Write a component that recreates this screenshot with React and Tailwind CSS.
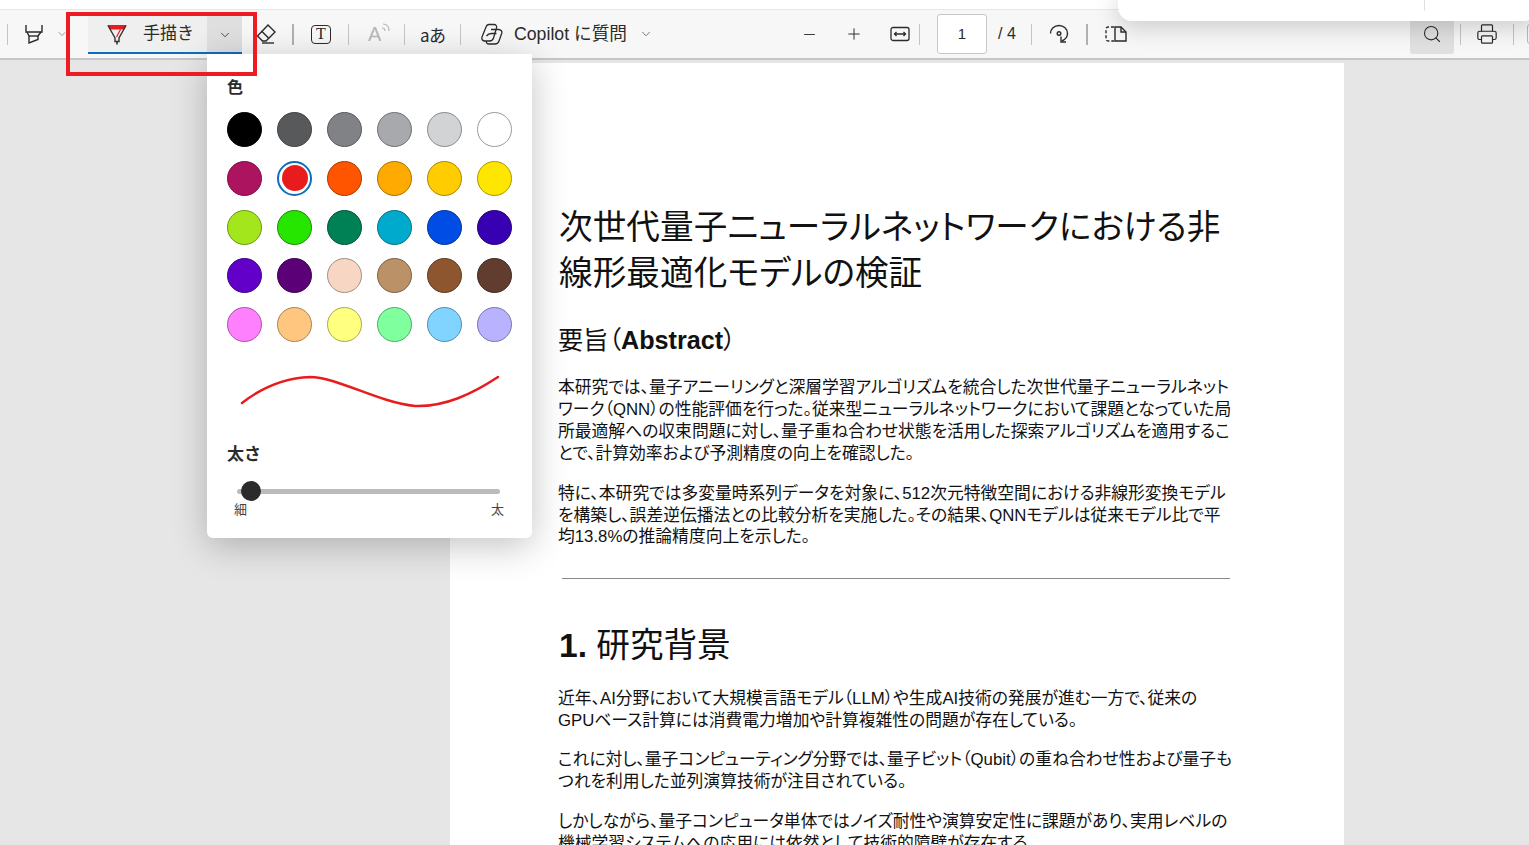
import React from "react";
import { Minus, Plus, ChevronDown, Search, Printer } from "lucide-react";

const jp = "font-['Liberation_Sans','Noto_Sans_CJK_JP',sans-serif]";

const colors = [
  ["#000000", "#000000"], ["#58595b", "#3f4042"], ["#808285", "#58595b"], ["#a7a9ac", "#6f7072"], ["#d1d3d4", "#8a8b8c"], ["#ffffff", "#9a9a9a"],
  ["#ad1460", "#7c0e45"], ["#e81c1c", "#e81c1c"], ["#ff5500", "#a83800"], ["#ffaa00", "#a87000"], ["#ffcc00", "#a88700"], ["#ffe600", "#a89800"],
  ["#a3e61c", "#6b9712"], ["#26e600", "#198a00"], ["#008055", "#00553a"], ["#00aacc", "#007087"], ["#004de6", "#003398"], ["#3700b3", "#250077"],
  ["#6200c9", "#410085"], ["#5c0077", "#3d004f"], ["#f7d7c4", "#a38e81"], ["#bb9167", "#7b6044"], ["#8e562e", "#5e391e"], ["#613d30", "#402820"],
  ["#ff80ff", "#a855a8"], ["#ffc680", "#a88355"], ["#ffff80", "#a8a855"], ["#80ff9f", "#55a869"], ["#80d4ff", "#558ca8"], ["#b9b3ff", "#7a76a8"],
];

function Sep({ left, right, dark }) {
  return <div className={`h-[21px] shrink-0 ${dark ? "w-[2px] bg-[#b0b0b0]" : "w-px bg-[#c4c4c4]"}`} style={{ marginLeft: left, marginRight: right }} />;
}

function Highlighter() {
  return (
    <svg width="20" height="22" viewBox="0 0 20 22" fill="none" stroke="#2b2b2b" strokeWidth="1.400">
      <path d="M2 2v7h16V2" />
      <path d="M3 9l2 4v7l9-3.500V13l3-4" />
      <path d="M5 13h9" />
    </svg>
  );
}

function DrawPen() {
  return (
    <svg width="22" height="22" viewBox="0 0 22 22" fill="none">
      <path d="M1.500 2h19L18 6.500H4z" fill="#e81c1c" />
      <path d="M2 2.500l7 12.500v3.500h4V15l7-12.500" stroke="#333" strokeWidth="1.400" />
      <path d="M10.500 14 14.500 6.500" stroke="#e81c1c" strokeWidth="1.200" />
      <path d="M11 18.500v3" stroke="#333" strokeWidth="1.600" />
    </svg>
  );
}

function Eraser() {
  return (
    <svg width="20" height="22" viewBox="0 0 20 22" fill="none" stroke="#2b2b2b" strokeWidth="1.400">
      <path d="M12 2l7 7-9 9H6.500L1.500 13z" />
      <path d="M5.500 8l7 7" />
      <path d="M6 20h12" />
    </svg>
  );
}

function TextBox() {
  return (
    <div className="flex h-[19px] w-[20px] items-center justify-center rounded-[4px] border-[1.5px] border-[#2b2b2b] font-['Liberation_Serif',serif] text-[16px] leading-none text-[#2b2b2b]">
      T
    </div>
  );
}

function ReadAloud() {
  return (
    <div className="relative flex h-5 w-5 items-center font-['Liberation_Sans',sans-serif] text-[20px] font-light leading-none text-[#b8b8b8]">
      A
      <svg className="absolute -right-[3px] -top-[1px]" width="10" height="10" viewBox="0 0 10 10" fill="none" stroke="#b8b8b8" strokeWidth="1.100">
        <path d="M1 5c2 0 3 1 3 3" />
        <path d="M2 1c4 0 6 3 6 7" />
      </svg>
    </div>
  );
}

function Copilot() {
  return (
    <svg width="24" height="22" viewBox="0 0 24 22" fill="none" stroke="#2b2b2b" strokeWidth="1.300">
      <path d="M9 1.500h5c2 0 3 1.500 2.500 3.500l-3 10c-.6 2-2 3-4 3H5c-2.500 0-3.800-2-3-4L6 4c.5-1.500 1.500-2.500 3-2.500z" />
      <path d="M11 6.500h7.500c2.500 0 4 2 3.200 4L19 18c-.6 1.800-2 3-4 3H9c-2 0-3-1.500-2.700-3" />
      <path d="M6.500 13c1.500-2 3-2.500 5-2.500h5" />
    </svg>
  );
}

function FitWidth() {
  return (
    <svg width="20" height="16" viewBox="0 0 20 16" fill="none" stroke="#2b2b2b" strokeWidth="1.300">
      <rect x="1" y="1.500" width="18" height="13" rx="2" />
      <path d="M4.500 8h11M6.500 6l-2 2 2 2M13.500 6l2 2-2 2" />
    </svg>
  );
}

function Rotate() {
  return (
    <svg width="22" height="22" viewBox="0 0 22 22" fill="none" stroke="#2b2b2b" strokeWidth="1.400">
      <path d="M2.500 10.500a8.500 8 0 0 1 17 0c0 3.500-2.500 6-5.500 7.500" />
      <path d="M13 13.500v5.500h5" />
      <circle cx="11" cy="10.500" r="1.800" />
    </svg>
  );
}

function PageView() {
  return (
    <svg width="22" height="18" viewBox="0 0 22 18" fill="none" stroke="#2b2b2b" strokeWidth="1.400">
      <path d="M9 2H3a2 2 0 0 0-2 2v10a2 2 0 0 0 2 2h6" strokeDasharray="3 2" />
      <path d="M10 2h6l5 5v9H10z" />
      <path d="M16 2v5h5" />
    </svg>
  );
}

function Toolbar() {
  return (
    <div className="flex h-[50px] shrink-0 items-center border-b-2 border-[#c6c6c6] bg-[#f7f7f7] text-[#2b2b2b] [&>*]:shrink-0">
      <Sep left={7} right={16} />
      <Highlighter />
      <ChevronDown size={12} strokeWidth={1.200} className="ml-[12px] text-[#555]" />
      <div className="ml-[20px] mt-[2px] flex h-[42px] w-[154px] self-start border-b-2 border-[#0f6cbd] bg-[#efefef]">
        <div className="flex flex-1 items-center pl-[18px] pt-[4px]">
          <DrawPen />
          <span className={`ml-[15px] text-[17px] ${jp}`}>手描き</span>
        </div>
        <div className="flex w-[35px] items-center justify-center bg-[#dfdfdf] pt-[5px]">
          <ChevronDown size={14} strokeWidth={1.400} />
        </div>
      </div>
      <div className="ml-[14px] w-[20px]"><Eraser /></div>
      <Sep left={16} right={17} dark />
      <TextBox />
      <Sep left={17} right={19} />
      <ReadAloud />
      <Sep left={16} right={15} />
      <span className="w-[25px] text-[17px] leading-none tracking-[-0.5px] whitespace-nowrap font-['Noto_Sans_CJK_JP',sans-serif]">aあ</span>
      <Sep left={15} right={19} />
      <Copilot />
      <span className={`ml-[10px] w-[115px] text-[17.700px] whitespace-nowrap ${jp}`}>Copilot に質問</span>
      <ChevronDown size={14} strokeWidth={1.200} className="ml-[10px] text-[#444]" />
      <Minus size={17} strokeWidth={1.300} className="ml-[148px]" />
      <Plus size={18} strokeWidth={1.300} className="ml-[27px]" />
      <div className="ml-[27px]"><FitWidth /></div>
      <Sep left={9} right={17} />
      <div className={`flex h-[40px] w-[50px] items-center justify-center rounded-[3px] border border-[#c8c8c8] bg-white text-[15px] ${jp}`}>1</div>
      <span className={`ml-[11px] w-[21px] text-[16px] whitespace-nowrap ${jp}`}>/ 4</span>
      <Sep left={12} right={16} />
      <Rotate />
      <Sep left={16} right={17} dark />
      <PageView />
      <div className="ml-[283px] flex h-[44px] w-[44px] self-start items-center justify-center rounded-b-[3px] bg-[#e0e0e0] pt-[4px]">
        <Search size={20} strokeWidth={1.300} />
      </div>
      <Sep left={6} right={15} />
      <Printer size={22} strokeWidth={1.300} />
      <Sep left={15} right={13} />
      <div className="h-[20px] w-[16px] rounded-[3px] border-[1.5px] border-[#b8b8b8]" />
    </div>
  );
}

function Popover() {
  return (
    <div className={`absolute left-[207px] top-[54px] z-20 h-[484px] w-[325px] rounded-b-[6px] bg-white shadow-[0_8px_36px_rgba(0,0,0,0.24)] pl-[20px] pr-[19px] pt-[22px] text-[#2b2b2b] ${jp}`}>
      <div className="text-[16px] font-bold leading-[24px]">色</div>
      <div className="mt-[12px] grid grid-cols-[repeat(6,35px)] gap-x-[15px] gap-y-[13.750px]">
        {colors.map(([fill, line], i) =>
          i === 7 ? (
            <div key={i} className="flex h-[35px] w-[35px] items-center justify-center rounded-full border-[2px] border-[#0f6cbd] bg-white">
              <div className="h-[26px] w-[26px] rounded-full" style={{ backgroundColor: fill }} />
            </div>
          ) : (
            <div key={i} className="h-[35px] w-[35px] rounded-full border" style={{ backgroundColor: fill, borderColor: line }} />
          )
        )}
      </div>
      <svg className="mt-[22px] -ml-[20px] block" width="325" height="52" viewBox="0 0 325 52" fill="none">
        <path d="M35 26C58 8 80 1 103 0C130 0 170 25 208 29C238 30 265 17 291 0" transform="translate(0 13)" stroke="#e81c1c" strokeWidth="2.500" strokeLinecap="round" />
      </svg>
      <div className="mt-[27px] text-[17px] font-bold leading-[24px]">太さ</div>
      <div className="relative mt-[11px] ml-[10px] h-[26px] w-[263px]">
        <div className="absolute left-0 right-0 top-[11px] h-[5px] rounded-full bg-[#bbbbbb]" />
        <div className="absolute left-[4px] top-[3px] h-5 w-5 rounded-full bg-[#2b2b2b]" />
      </div>
      <div className="-mt-[2px] ml-[7px] flex w-[270px] justify-between text-[13px] leading-[16px] text-[#444]">
        <span>細</span>
        <span>太</span>
      </div>
    </div>
  );
}

function Line({ children }) {
  return <span className="block whitespace-nowrap">{children}</span>;
}

function Body({ lines, className }) {
  return (
    <p className={`text-[16.800px] leading-[21.900px] text-[#111] ${className}`}>
      {lines.map((l) => <Line key={l}>{l}</Line>)}
    </p>
  );
}

function PdfPage() {
  return (
    <div className={`ml-[450px] mt-[3px] w-[894px] flex-1 bg-white pl-[108px] pt-[142px] text-[#111] [font-feature-settings:'palt'] ${jp}`}>
      <h1 className="ml-[1px] text-[33.600px] font-normal leading-[46px] tracking-[0.1px]">
        <Line>次世代量子ニューラルネットワークにおける非</Line>
        <Line>線形最適化モデルの検証</Line>
      </h1>
      <h2 className="mt-[25px] text-[25.200px] leading-[36px]">
        要旨（<b>Abstract</b>）
      </h2>
      <Body
        className="mt-[19px]"
        lines={[
          "本研究では、量子アニーリングと深層学習アルゴリズムを統合した次世代量子ニューラルネット",
          "ワーク（QNN）の性能評価を行った。従来型ニューラルネットワークにおいて課題となっていた局",
          "所最適解への収束問題に対し、量子重ね合わせ状態を活用した探索アルゴリズムを適用するこ",
          "とで、計算効率および予測精度の向上を確認した。",
        ]}
      />
      <Body
        className="mt-[18px]"
        lines={[
          "特に、本研究では多変量時系列データを対象に、512次元特徴空間における非線形変換モデル",
          "を構築し、誤差逆伝播法との比較分析を実施した。その結果、QNNモデルは従来モデル比で平",
          "均13.8%の推論精度向上を示した。",
        ]}
      />
      <hr className="ml-[4px] mt-[30px] w-[668px] border-t border-[#8a8a8a]" />
      <h2 className="ml-[1px] mt-[44px] text-[33.600px] leading-[46px]">
        <b>1.</b> 研究背景
      </h2>
      <Body
        className="mt-[19px]"
        lines={[
          "近年、AI分野において大規模言語モデル（LLM）や生成AI技術の発展が進む一方で、従来の",
          "GPUベース計算には消費電力増加や計算複雑性の問題が存在している。",
        ]}
      />
      <Body
        className="mt-[17px]"
        lines={[
          "これに対し、量子コンピューティング分野では、量子ビット（Qubit）の重ね合わせ性および量子も",
          "つれを利用した並列演算技術が注目されている。",
        ]}
      />
      <Body
        className="mt-[18px]"
        lines={[
          "しかしながら、量子コンピュータ単体ではノイズ耐性や演算安定性に課題があり、実用レベルの",
          "機械学習システムへの応用には依然として技術的障壁が存在する。",
        ]}
      />
    </div>
  );
}

export default function App() {
  return (
    <div className="relative flex h-screen w-full flex-col overflow-hidden bg-[#e6e6e6]">
      <div className="h-[10px] shrink-0 border-b border-[#e8e8e8] bg-white" />
      <Toolbar />
      <PdfPage />
      <Popover />
      {/* annotation box drawn over the screenshot */}
      <div className="absolute left-[66px] top-[12px] z-30 h-[64px] w-[191px] border-[4px] border-[#ed1c24]" />
      {/* floating panel at the top right */}
      <div className="absolute -top-[10px] left-[1118px] z-20 h-[31px] w-[420px] rounded-b-[14px] bg-white shadow-[0_6px_24px_rgba(0,0,0,0.18)]">
        <div className="absolute left-[306px] top-[10px] h-[11px] w-px bg-[#e0e0e0]" />
      </div>
    </div>
  );
}
